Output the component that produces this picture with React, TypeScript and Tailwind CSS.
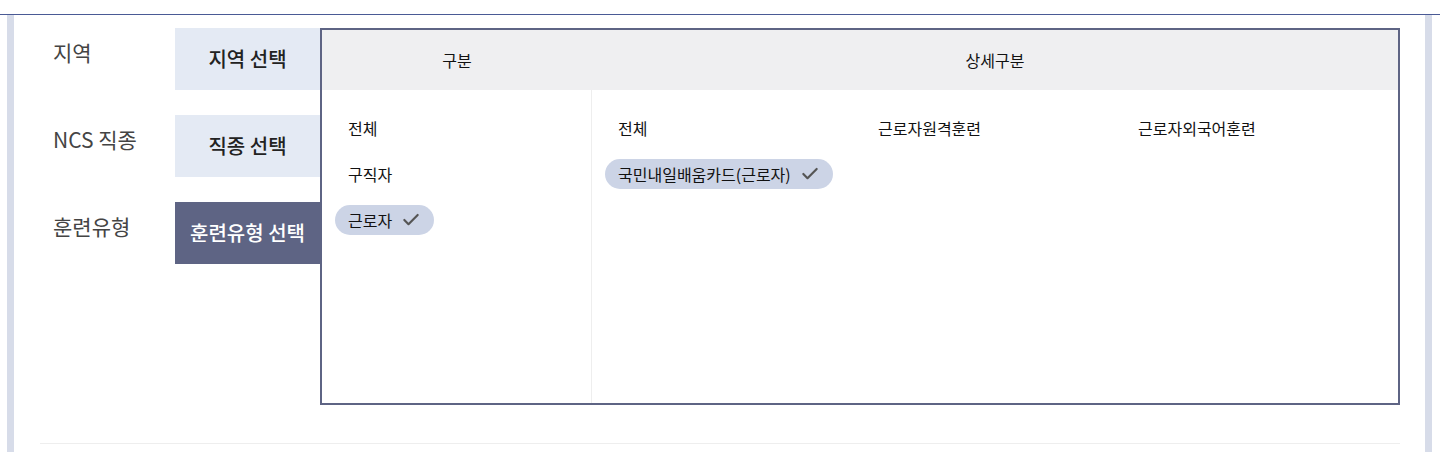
import { Check } from "lucide-react";

const rows = [
  { label: "지역", button: "지역 선택", active: false },
  { label: "NCS 직종", button: "직종 선택", active: false },
  { label: "훈련유형", button: "훈련유형 선택", active: true },
];

const groups = [
  { name: "전체", selected: false },
  { name: "구직자", selected: false },
  { name: "근로자", selected: true },
];

const details = [
  { name: "전체", selected: false },
  { name: "근로자원격훈련", selected: false },
  { name: "근로자외국어훈련", selected: false },
  { name: "국민내일배움카드(근로자)", selected: true },
];

function Item({ name, selected }: { name: string; selected: boolean }) {
  return (
    <div className="flex h-[30px] items-center">
      <span
        className={`flex h-[30px] items-center gap-[9px] rounded-full px-[13px] text-[16px] leading-none text-[#111] ${
          selected ? "bg-[#ccd4e6]" : ""
        }`}
      >
        {name}
        {selected && <Check size={20} strokeWidth={2.6} className="text-[#555]" />}
      </span>
    </div>
  );
}

export default function App() {
  return (
    <div
      className="h-[452px] w-[1440px] overflow-hidden bg-white"
      style={{ fontFamily: '"Noto Sans CJK KR", "Noto Sans", sans-serif' }}
    >
      <div className="h-[14px]" />
      <div className="h-px bg-[#4a5a95]" />
      <div className="flex h-[437px]">
        <div className="w-[7px]" />
        <div className="w-[7px] bg-[#d7dce9]" />

        <div className="flex w-[1411px] flex-col pl-[26px] pt-[13px]">
          <div className="flex">
            <div className="flex w-[280px] flex-col gap-[25px]">
              {rows.map((row) => (
                <div key={row.label} className="flex h-[62px]">
                  <div className="w-[135px] pl-[13px] pt-[9px] text-[21px] leading-[30px] text-[#444]">
                    {row.label}
                  </div>
                  <div
                    className={`flex w-[145px] items-center justify-center text-[20px] font-medium ${
                      row.active ? "bg-[#5e6484] text-white" : "bg-[#e4eaf4] text-[#222]"
                    }`}
                  >
                    {row.button}
                  </div>
                </div>
              ))}
            </div>

            <div className="flex h-[377px] w-[1080px] flex-col border-2 border-[#5e6484]">
              <div className="flex h-[60px] shrink-0 items-center bg-[#efeff1] text-[16px] text-[#111]">
                <div className="w-[270px] text-center">구분</div>
                <div className="flex-1 text-center">상세구분</div>
              </div>
              <div className="flex flex-1">
                <div className="flex w-[270px] flex-col gap-[16px] border-r border-[#eeeeee] px-[13px] pt-[23px]">
                  {groups.map((g) => (
                    <Item key={g.name} {...g} />
                  ))}
                </div>
                <div className="grid flex-1 grid-cols-[260px_260px_260px] content-start gap-y-[16px] px-[13px] pt-[23px]">
                  {details.map((d) => (
                    <Item key={d.name} {...d} />
                  ))}
                </div>
              </div>
            </div>
          </div>
          <div className="mt-[38px] h-px w-[1360px] bg-[#eeeeee]" />
        </div>

        <div className="w-[7px] bg-[#d7dce9]" />
        <div className="w-[8px]" />
      </div>
    </div>
  );
}
